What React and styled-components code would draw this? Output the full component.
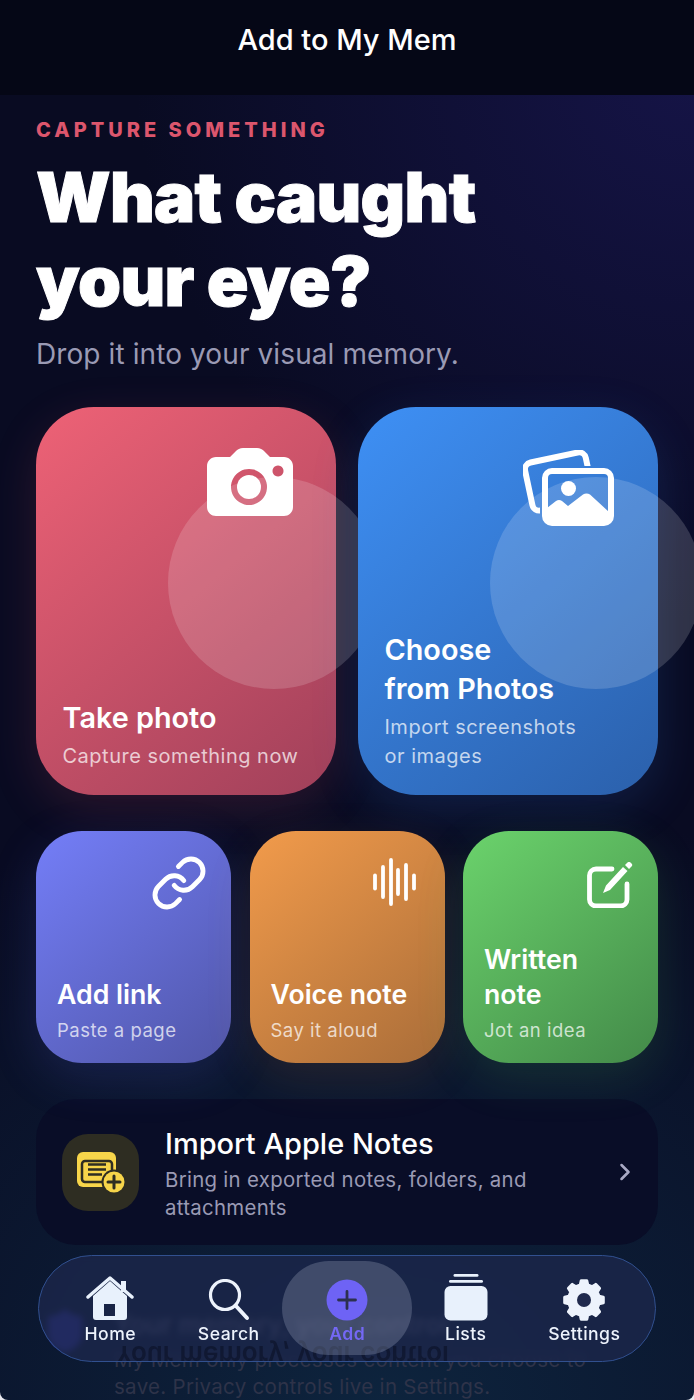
import styled, { createGlobalStyle } from "styled-components";
import { ShieldCheck, ChevronRight, Link } from "lucide-react";

const GlobalStyle = createGlobalStyle`
  html, body {
    margin: 0;
    background: #e8e8ee;
  }
  * {
    box-sizing: border-box;
  }
`;

// 8 tooth gear, built once so the settings icon stays symmetrical
const gearPath = () => {
  const pts = [];
  const teeth = 8;
  for (let i = 0; i < teeth; i++) {
    const a = (i / teeth) * Math.PI * 2 - Math.PI / 2;
    const step = Math.PI / teeth;
    [
      [15.5, -step * 0.62],
      [19.5, -step * 0.36],
      [19.5, step * 0.36],
      [15.5, step * 0.62],
    ].forEach(([r, d]) => {
      pts.push(`${(21 + r * Math.cos(a + d)).toFixed(2)} ${(21 + r * Math.sin(a + d)).toFixed(2)}`);
    });
  }
  return `M${pts.join("L")}Z`;
};

const Page = styled.div`
  position: relative;
  width: 694px;
  height: 1400px;
  overflow: hidden;
  font-family: Inter, "Noto Sans", sans-serif;
  color: #fff;
  border-radius: 0 0 8px 8px;
  background:
    radial-gradient(560px 560px at 100% 60px, rgba(30, 26, 96, 0.6), transparent 100%),
    radial-gradient(760px 620px at 55% 100%, rgba(14, 40, 66, 0.85), transparent 100%),
    #090b22;
`;

const Header = styled.header`
  height: 95px;
  display: flex;
  align-items: flex-start;
  justify-content: center;
  padding-top: 22px;
  background: #050716;
  font-size: 29px;
  line-height: 36px;
  font-weight: 500;
`;

const Content = styled.main`
  padding: 0 36px;
`;

const Eyebrow = styled.div`
  margin-top: 23px;
  font-size: 20px;
  line-height: 24px;
  font-weight: 800;
  letter-spacing: 4px;
  color: #dc566d;
`;

const Title = styled.h1`
  margin: 13px 0 0;
  font-size: 69px;
  line-height: 84px;
  font-weight: 900;
  letter-spacing: -0.7px;
  -webkit-text-stroke: 1px #fff;
`;

const Subtitle = styled.p`
  margin: 13px 0 0;
  font-size: 28px;
  line-height: 36px;
  letter-spacing: 0.1px;
  color: #9a9ab4;
`;

const BigRow = styled.div`
  margin-top: 35px;
  display: grid;
  grid-template-columns: 300px 300px;
  gap: 22px;
`;

const SmallRow = styled.div`
  margin-top: 36px;
  display: grid;
  grid-template-columns: 195px 195px 195px;
  justify-content: space-between;
`;

const Card = styled.div`
  position: relative;
  z-index: 0;
  display: flex;
  flex-direction: column;
  justify-content: flex-end;
  height: ${({ $big }) => ($big ? "388px" : "232px")};
  padding: ${({ $big }) => ($big ? "0 27px 24px 26.5px" : "0 21px 19px")};
  border-radius: ${({ $big }) => ($big ? "58px" : "46px")};
  background: linear-gradient(140deg, ${({ $from }) => $from}, ${({ $to }) => $to});
  box-shadow: 0 14px 48px ${({ $glow }) => $glow};
`;

const Bubble = styled.span`
  position: absolute;
  top: 70px;
  right: -44px;
  width: 212px;
  height: 212px;
  border-radius: 50%;
  background: rgba(255, 255, 255, 0.16);
`;

const CardIcon = styled.span`
  position: absolute;
  top: ${({ $top }) => $top}px;
  right: ${({ $right }) => $right}px;
  display: block;
  line-height: 0;
`;

const CardTitle = styled.div`
  font-size: ${({ $big }) => ($big ? "28.8px" : "26.7px")};
  line-height: ${({ $big }) => ($big ? "39px" : "35px")};
  font-weight: 600;
`;

const CardSub = styled.div`
  margin-top: ${({ $big }) => ($big ? "5px" : "4px")};
  font-size: ${({ $big }) => ($big ? "20px" : "18.5px")};
  line-height: ${({ $big }) => ($big ? "29px" : "28px")};
  letter-spacing: 0.5px;
  color: rgba(255, 255, 255, 0.72);
`;

const ImportCard = styled.div`
  margin-top: 36px;
  height: 146px;
  display: flex;
  align-items: center;
  padding: 0 26px;
  border-radius: 40px;
  background: #090d27;
`;

const ImportTile = styled.div`
  flex: none;
  width: 77px;
  height: 77px;
  display: flex;
  align-items: center;
  justify-content: center;
  border-radius: 26px;
  background: #2e2d22;
`;

const ImportText = styled.div`
  flex: 1;
  margin-left: 26px;
  padding-top: 2px;
`;

const ImportTitle = styled.div`
  font-size: 29px;
  line-height: 38px;
  font-weight: 500;
`;

const ImportSub = styled.div`
  margin-top: 3px;
  font-size: 20.4px;
  line-height: 28px;
  letter-spacing: 0.3px;
  color: #9a9ab4;
`;

const Chevron = styled.span`
  flex: none;
  margin-right: -7px;
  color: #a9a9c4;
  line-height: 0;
`;

const Privacy = styled.section`
  margin-top: 63px;
  display: flex;
  gap: 26px;
  margin-left: 6px;
  color: #2e3349;
`;

const PrivacyText = styled.div`
  width: 520px;
`;

const PrivacyTitle = styled.div`
  font-size: 26px;
  line-height: 34px;
  font-weight: 600;
  color: #6f7590;
`;

const PrivacyBody = styled.div`
  margin-top: 4px;
  font-size: 20.5px;
  line-height: 27px;
  letter-spacing: 0.3px;
`;

const TabBar = styled.nav`
  position: absolute;
  left: 38px;
  top: 1255px;
  width: 618px;
  height: 107px;
  display: grid;
  grid-template-columns: repeat(5, 118.5px);
  padding: 0 12px;
  border-radius: 54px;
  border: 1.5px solid #31508f;
  overflow: hidden;
  background: rgba(28, 38, 74, 0.84);
  backdrop-filter: blur(3px);
`;

const Reflection = styled.span`
  position: absolute;
  left: 76px;
  top: 84px;
  font-size: 26px;
  line-height: 30px;
  font-weight: 600;
  white-space: nowrap;
  color: rgba(8, 12, 30, 0.5);
  transform: scaleY(-1);
  filter: blur(0.7px);
`;

const Tab = styled.div`
  position: relative;
  display: flex;
  flex-direction: column;
  align-items: center;
  color: ${({ $active }) => ($active ? "#7468f5" : "#edf3fc")};
  font-size: 17.6px;
  line-height: 22px;
  font-weight: ${({ $active }) => ($active ? 600 : 500)};
  letter-spacing: 0.45px;
`;

const ActivePill = styled.span`
  position: absolute;
  left: -6px;
  top: 5px;
  width: 130px;
  height: 94px;
  border-radius: 47px;
  background: rgba(130, 140, 165, 0.38);
`;

const TabIcon = styled.span`
  position: relative;
  height: 65px;
  display: flex;
  align-items: flex-end;
  justify-content: center;
  line-height: 0;
`;

const TabLabel = styled.span`
  position: relative;
  margin-top: 2px;
`;

const CameraIcon = () => (
  <svg width="86" height="68" viewBox="0 0 86 68">
    <path
      fill="#fff"
      fillRule="evenodd"
      d="M9 9H23L28.5 3.5C30.5 1.5 33 0 36 0H50C53 0 55.5 1.5 57.5 3.5L63 9H77C82 9 86 13 86 18V59C86 64 82 68 77 68H9C4 68 0 64 0 59V18C0 13 4 9 9 9ZM42 21a18 18 0 1 0 .01 0ZM71 17.500a5.500 5.500 0 1 0 .01 0Z"
    />
    <circle cx="42" cy="39" r="12" fill="#fff" />
  </svg>
);

const PhotosIcon = () => (
  <svg width="92" height="76" viewBox="0 0 92 76">
    <mask id="behindFront">
      <rect width="92" height="76" fill="#fff" />
      <rect x="17" y="16" width="75" height="60" rx="9" fill="#000" />
    </mask>
    <g mask="url(#behindFront)">
      <rect
        x="5"
        y="7"
        width="62"
        height="49"
        rx="7"
        fill="none"
        stroke="#fff"
        strokeWidth="6"
        transform="rotate(-12 36 31)"
      />
    </g>
    <rect x="22" y="21" width="66" height="52" rx="7" fill="none" stroke="#fff" strokeWidth="6" />
    <circle cx="45.5" cy="38.5" r="7.5" fill="#fff" />
    <path
      fill="#fff"
      d="M24 58L33 51C35 49.500 37 49.500 39 51L45 56L60 44.500C62 43 65 43 67 44.500L86 62V72H24Z"
    />
  </svg>
);

const waveBars = [
  [2, 17],
  [10, 34],
  [18, 48],
  [25, 28],
  [33, 38],
  [41, 17],
];

const WaveIcon = () => (
  <svg width="44" height="48" viewBox="0 0 44 48" stroke="#fff" strokeWidth="3.800" strokeLinecap="round">
    {waveBars.map(([x, h]) => (
      <line key={x} x1={x} x2={x} y1={24 - h / 2 + 2} y2={24 + h / 2 - 2} />
    ))}
  </svg>
);

const NoteIcon = () => (
  <svg width="46" height="46" viewBox="0 0 46 46" fill="none">
    <path
      stroke="#fff"
      strokeWidth="4.800"
      strokeLinecap="round"
      d="M25 7H9A6.500 6.500 0 0 0 2.500 13.500V37.500A6.500 6.500 0 0 0 9 44H33.500A6.500 6.500 0 0 0 40 37.500V22"
    />
    <path fill="#fff" d="M16 31L19 23.500L36 5L40.500 9L23 28ZM38 3L40.500 0.500C41.500 -0.300 42.500 -0.300 43.500 0.500L44.500 1.500C45.500 2.500 45.500 3.500 44.500 4.500L42 7Z" />
  </svg>
);

const ImportIcon = () => (
  <svg width="50" height="44" viewBox="0 0 50 44">
    <rect x="1" y="2" width="39" height="35" rx="6" fill="#f7d54a" />
    <rect x="6" y="11" width="30" height="21" rx="3" fill="none" stroke="#2e2d22" strokeWidth="2.500" />
    <path d="M12 14.500H30M12 19.500H30M12 24.500H26" stroke="#2e2d22" strokeWidth="2.500" />
    <circle cx="38" cy="32" r="12.500" fill="#2e2d22" />
    <circle cx="38" cy="32" r="10.500" fill="#f7d54a" />
    <path d="M38 26V38M32 32H44" stroke="#2e2d22" strokeWidth="3" strokeLinecap="round" />
  </svg>
);

const HomeIcon = () => (
  <svg width="48" height="45" viewBox="0 0 48 45">
    <path fill="#e8f1fc" fillRule="evenodd" d="M7 20L24 5L41 20V41A3 3 0 0 1 38 44H10A3 3 0 0 1 7 41ZM18 28V40H29V28Z" />
    <path fill="none" stroke="#e8f1fc" strokeWidth="3.500" strokeLinecap="round" strokeLinejoin="round" d="M2 21L24 2L46 21" />
    <rect x="35" y="5" width="5" height="11" fill="#e8f1fc" />
  </svg>
);

const SearchIcon = () => (
  <svg width="42" height="42" viewBox="0 0 42 42" fill="none" stroke="#edf3fc" strokeLinecap="round">
    <circle cx="17" cy="16" r="14.500" strokeWidth="3.200" />
    <path d="M28 27L39 39" strokeWidth="4" />
  </svg>
);

const AddIcon = () => (
  <svg width="42" height="42" viewBox="0 0 42 42">
    <circle cx="21" cy="21" r="20.500" fill="#6e63f5" />
    <path d="M21 12.500V29.500M12.500 21H29.500" stroke="#2c3050" strokeWidth="2.800" strokeLinecap="round" />
  </svg>
);

const ListsIcon = () => (
  <svg width="44" height="47" viewBox="0 0 44 47" fill="#e8f1fc">
    <rect x="9.500" y="0" width="25" height="2.800" rx="1.400" />
    <rect x="5" y="6" width="34" height="2.800" rx="1.400" />
    <rect x="0.500" y="12" width="43" height="34.500" rx="6" />
  </svg>
);

const GearIcon = () => (
  <svg width="42" height="42" viewBox="0 0 42 42">
    <path d={gearPath()} fill="#edf3fc" stroke="#edf3fc" strokeWidth="3" strokeLinejoin="round" />
    <circle cx="21" cy="21" r="7" fill="#202a4d" />
  </svg>
);

const tabs = [
  { label: "Home", icon: <HomeIcon /> },
  { label: "Search", icon: <SearchIcon /> },
  { label: "Add", icon: <AddIcon />, active: true },
  { label: "Lists", icon: <ListsIcon /> },
  { label: "Settings", icon: <GearIcon /> },
];

const App = () => {
  return (
    <Page>
      <GlobalStyle />
      <Header>Add to My Mem</Header>
      <Content>
        <Eyebrow>CAPTURE SOMETHING</Eyebrow>
        <Title>
          What caught
          <br />
          your eye?
        </Title>
        <Subtitle>Drop it into your visual memory.</Subtitle>

        <BigRow>
          <Card $big $from="#ee6276" $to="#a0405a" $glow="rgba(226, 80, 100, 0.16)">
            <Bubble />
            <CardIcon $top={41} $right={43}>
              <CameraIcon />
            </CardIcon>
            <CardTitle $big>Take photo</CardTitle>
            <CardSub $big>Capture something now</CardSub>
          </Card>
          <Card $big $from="#3e90f5" $to="#2b60ab" $glow="rgba(50, 120, 230, 0.18)">
            <Bubble />
            <CardIcon $top={43} $right={43}>
              <PhotosIcon />
            </CardIcon>
            <CardTitle $big>
              Choose
              <br />
              from Photos
            </CardTitle>
            <CardSub $big>
              Import screenshots
              <br />
              or images
            </CardSub>
          </Card>
        </BigRow>

        <SmallRow>
          <Card $from="#747ef8" $to="#5056a8" $glow="rgba(90, 100, 230, 0.18)">
            <CardIcon $top={23} $right={23}>
              <Link size={58} strokeWidth={2} color="#fff" />
            </CardIcon>
            <CardTitle>Add link</CardTitle>
            <CardSub>Paste a page</CardSub>
          </Card>
          <Card $from="#f29b4b" $to="#a96d39" $glow="rgba(230, 140, 60, 0.12)">
            <CardIcon $top={27} $right={28}>
              <WaveIcon />
            </CardIcon>
            <CardTitle>Voice note</CardTitle>
            <CardSub>Say it aloud</CardSub>
          </Card>
          <Card $from="#6bd36c" $to="#438a49" $glow="rgba(80, 190, 90, 0.16)">
            <CardIcon $top={31} $right={25}>
              <NoteIcon />
            </CardIcon>
            <CardTitle>
              Written
              <br />
              note
            </CardTitle>
            <CardSub>Jot an idea</CardSub>
          </Card>
        </SmallRow>

        <ImportCard>
          <ImportTile>
            <ImportIcon />
          </ImportTile>
          <ImportText>
            <ImportTitle>Import Apple Notes</ImportTitle>
            <ImportSub>Bring in exported notes, folders, and attachments</ImportSub>
          </ImportText>
          <Chevron>
            <ChevronRight size={28} strokeWidth={2.2} />
          </Chevron>
        </ImportCard>

        <Privacy>
          <ShieldCheck size={46} color="#3f3fd0" fill="#3f3fd0" />
          <PrivacyText>
            <PrivacyTitle>Your memory, your control</PrivacyTitle>
            <PrivacyBody>My Mem only processes content you choose to save. Privacy controls live in Settings.</PrivacyBody>
          </PrivacyText>
        </Privacy>
      </Content>

      <TabBar>
        <Reflection>Your memory, your control</Reflection>
        {tabs.map((tab) => (
          <Tab key={tab.label} $active={tab.active}>
            {tab.active && <ActivePill />}
            <TabIcon>{tab.icon}</TabIcon>
            <TabLabel>{tab.label}</TabLabel>
          </Tab>
        ))}
      </TabBar>
    </Page>
  );
};

export default App;
